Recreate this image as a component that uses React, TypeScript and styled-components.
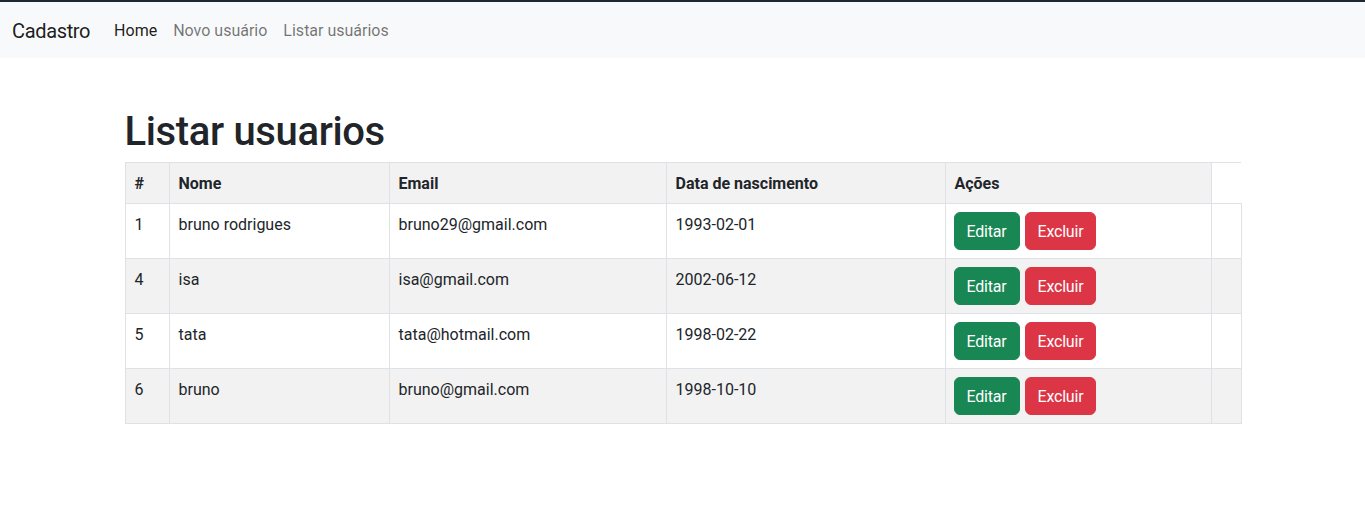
import React from "react";
import styled, { createGlobalStyle } from "styled-components";

const FONT = `"Segoe UI", Roboto, "Liberation Sans", Arial, sans-serif`;

const GlobalStyle = createGlobalStyle`
  *, *::before, *::after { box-sizing: border-box; }
  html, body { margin: 0; padding: 0; background: #fff; }
  body {
    font-family: ${FONT};
    font-size: 16px;
    line-height: 1.5;
    color: #212529;
  }
`;

const Navbar = styled.nav`
  background: #f8f9fa;
  border-top: 2px solid #1e2a33;
  padding: 8px 0;
`;

const NavInner = styled.div`
  display: flex;
  align-items: center;
  padding: 0 12px;
`;

const Brand = styled.a`
  font-size: 20px;
  line-height: 30px;
  padding: 6px 0 4px;
  margin-right: 16px;
  letter-spacing: -0.35px;
  color: rgba(0, 0, 0, 0.9);
  text-decoration: none;
`;

const NavList = styled.ul`
  display: flex;
  list-style: none;
  margin: 0;
  padding: 0;
`;

const NavLink = styled.a<{ $active?: boolean }>`
  display: block;
  padding: 9px 8px 7px;
  color: ${(p) => (p.$active ? "rgba(0,0,0,0.9)" : "rgba(0,0,0,0.55)")};
  text-decoration: none;
`;

const Container = styled.main`
  max-width: 1140px;
  margin: 48px auto 0;
  padding: 0 12px;
`;

const Title = styled.h1`
  font-size: 40px;
  font-weight: 500;
  line-height: 1.2;
  letter-spacing: -0.35px;
  padding-top: 2px;
  margin: 0 0 6px;
`;

const Table = styled.table`
  width: 100%;
  border-collapse: collapse;
  table-layout: fixed;
  margin-bottom: 16px;
  color: #212529;
`;

const Body = styled.tbody`
  border-top: 1px solid #dee2e6;
  border-bottom: 1px solid #dee2e6;
`;

const Row = styled.tr<{ $striped?: boolean }>`
  background: ${(p) => (p.$striped ? "#f2f2f2" : "#fff")};
`;

const HeadCell = styled.th`
  text-align: left;
  font-weight: 700;
  padding: 9px 8px 7px 9px;
  border: 1px solid #dee2e6;
  vertical-align: top;
`;

const Cell = styled.td`
  padding: 9px 8px 7px 9px;
  border: 1px solid #dee2e6;
  vertical-align: top;
`;

const ActionCell = styled.td`
  padding: 8px;
  border: 1px solid #dee2e6;
  vertical-align: top;
`;

const Actions = styled.div`
  display: flex;
  gap: 5px;
`;

const Button = styled.button<{ $variant: "success" | "danger" }>`
  font-family: ${FONT};
  font-size: 16px;
  line-height: 1.5;
  padding: 7px 12px 5px;
  border-radius: 6px;
  letter-spacing: -0.2px;
  border: 1px solid ${(p) => (p.$variant === "success" ? "#198754" : "#dc3545")};
  background: ${(p) => (p.$variant === "success" ? "#198754" : "#dc3545")};
  color: #fff;
  cursor: pointer;
`;

const users = [
  { id: 1, nome: "bruno rodrigues", email: "bruno29@gmail.com", data: "1993-02-01" },
  { id: 4, nome: "isa", email: "isa@gmail.com", data: "2002-06-12" },
  { id: 5, nome: "tata", email: "tata@hotmail.com", data: "1998-02-22" },
  { id: 6, nome: "bruno", email: "bruno@gmail.com", data: "1998-10-10" },
];

export default function App() {
  return (
    <>
      <GlobalStyle />
      <Navbar>
        <NavInner>
          <Brand href="#">Cadastro</Brand>
          <NavList>
            <li><NavLink href="#" $active>Home</NavLink></li>
            <li><NavLink href="#">Novo usuário</NavLink></li>
            <li><NavLink href="#">Listar usuários</NavLink></li>
          </NavList>
        </NavInner>
      </Navbar>
      <Container>
        <Title>Listar usuarios</Title>
        <Table>
          <colgroup>
            <col style={{ width: 44 }} />
            <col style={{ width: 220 }} />
            <col style={{ width: 277 }} />
            <col style={{ width: 279 }} />
            <col style={{ width: 266 }} />
            <col style={{ width: 30 }} />
          </colgroup>
          <Body>
            <Row $striped>
              <HeadCell>#</HeadCell>
              <HeadCell>Nome</HeadCell>
              <HeadCell>Email</HeadCell>
              <HeadCell>Data de nascimento</HeadCell>
              <HeadCell>Ações</HeadCell>
            </Row>
            {users.map((u, i) => (
              <Row key={u.id} $striped={i % 2 === 1}>
                <Cell>{u.id}</Cell>
                <Cell>{u.nome}</Cell>
                <Cell>{u.email}</Cell>
                <Cell>{u.data}</Cell>
                <ActionCell>
                  <Actions>
                    <Button $variant="success">Editar</Button>
                    <Button $variant="danger">Excluir</Button>
                  </Actions>
                </ActionCell>
                <Cell />
              </Row>
            ))}
          </Body>
        </Table>
      </Container>
    </>
  );
}
